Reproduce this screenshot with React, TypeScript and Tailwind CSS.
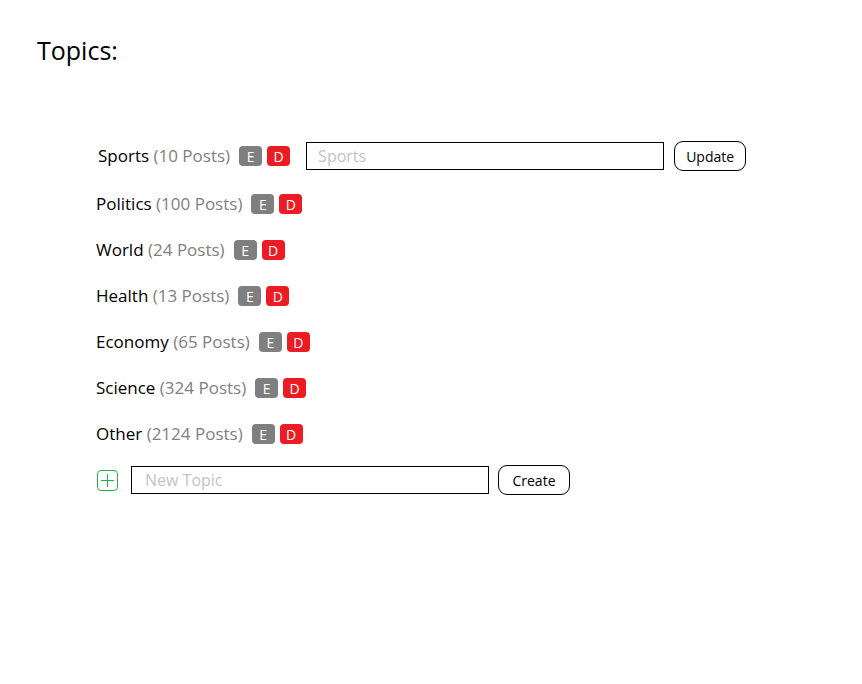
import { useState } from "react";

type Topic = {
  name: string;
  posts: number;
};

const topics: Topic[] = [
  { name: "Sports", posts: 10 },
  { name: "Politics", posts: 100 },
  { name: "World", posts: 24 },
  { name: "Health", posts: 13 },
  { name: "Economy", posts: 65 },
  { name: "Science", posts: 324 },
  { name: "Other", posts: 2124 },
];

const Badge = ({ label, red }: { label: string; red?: boolean }) => (
  <span
    className={
      "inline-flex items-center justify-center w-[23px] h-[20px] rounded-[4px] text-white text-[14px] " +
      (red ? "bg-[#ed1c24]" : "bg-[#7f7f7f]")
    }
  >
    {label}
  </span>
);

const App = () => {
  const [editing] = useState(0);

  return (
    <div className="min-h-screen bg-white text-black font-['Open_Sans',sans-serif]">
      <h1 className="pt-[33px] pl-[37px] text-[25px] leading-[34px]">Topics:</h1>

      <div className="pl-[96px] pt-[74px] flex flex-col">
        {topics.map((t, i) => (
          <div
            key={t.name}
            className={
              "flex items-center h-[30px] " +
              (i === editing ? "pl-[2px] mb-[18px]" : "mb-[16px]")
            }
          >
            <span className="text-[17px]">
              {t.name} <span className="text-[#808080]">({t.posts} Posts)</span>
            </span>
            <div className="flex items-center gap-[5px] ml-[9px]">
              <Badge label="E" />
              <Badge label="D" red />
            </div>
            {i === editing && (
              <>
                <input
                  placeholder={t.name}
                  className="ml-[16px] w-[358px] h-[28px] border border-black px-[11px] text-[16px] placeholder:text-[#c3c3c3] outline-none"
                />
                <button className="ml-[10px] w-[72px] h-[30px] border border-black rounded-[9px] text-[14px]">
                  Update
                </button>
              </>
            )}
          </div>
        ))}

        <div className="flex items-center h-[30px]">
          <span className="ml-[1px] w-[21px] h-[21px] border border-[#22b14c] rounded-[4px] flex items-center justify-center">
            <svg width="15" height="15" viewBox="0 0 15 15" shapeRendering="crispEdges">
              <path d="M7 1h1v13H7zM1 7h13v1H1z" fill="#22b14c" />
            </svg>
          </span>
          <input
            placeholder="New Topic"
            className="ml-[13px] w-[358px] h-[28px] border border-black px-[13px] text-[16px] placeholder:text-[#c3c3c3] outline-none"
          />
          <button className="ml-[9px] w-[72px] h-[30px] border border-black rounded-[9px] text-[14px]">
            Create
          </button>
        </div>
      </div>
    </div>
  );
};

export default App;
